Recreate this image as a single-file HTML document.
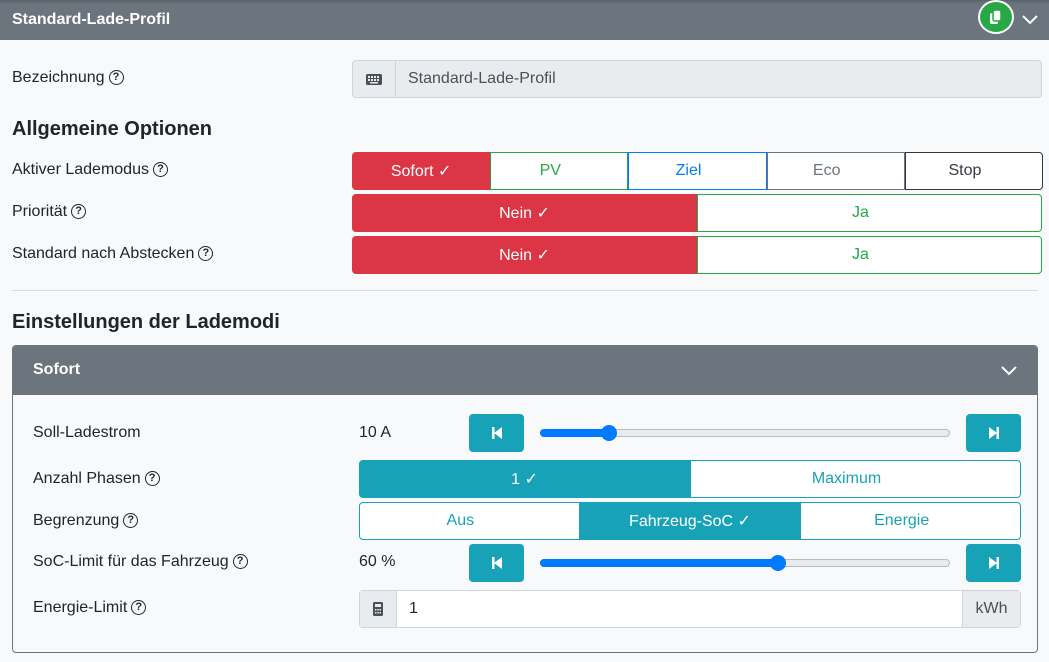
<!DOCTYPE html>
<html><head><meta charset="utf-8"><style>
*{box-sizing:border-box;margin:0;padding:0}
body{width:1049px;height:662px;overflow:hidden;background:#f8f9fa;font-family:"Liberation Sans",sans-serif;font-size:16px;color:#212529;position:relative}
.abs{position:absolute}
.hdr{left:0;top:0;width:1049px;height:40px;background:linear-gradient(#5a6169 0,#6c757d 4px,#6c757d);color:#fff;font-weight:bold;font-size:16px;line-height:40px;padding-left:12px}
.q{display:inline-block;width:15px;height:15px;border:1.6px solid #212529;border-radius:50%;font-size:11px;line-height:12px;text-align:center;font-weight:bold;vertical-align:2px;margin-left:4px}
.lbl{font-size:16px;line-height:20px}
.grp{display:flex;position:absolute}
.grp div{flex:1 1 0;width:0;text-align:center;border:1px solid;display:flex;align-items:center;justify-content:center}
.grp span.n{margin-right:18px}
h3{position:absolute;font-size:20px;font-weight:bold}
.tb{background:#17a2b8;border-radius:4px;width:55px;height:38px;display:flex;align-items:center;justify-content:center}
.rng{height:8px;border:1px solid #bbb;border-radius:4px;background:#e9ecef}
.fill{height:8px;background:#007bff;border-radius:4px;position:absolute;top:-1px;left:-1px}
.th{width:16px;height:16px;border-radius:50%;background:#007bff;position:absolute;top:-5px}
</style></head><body>
<div class="abs hdr">Standard-Lade-Profil</div>
<div class="abs" style="left:978px;top:0;width:36px;height:34px;border-radius:50%;background:#28a745;border:2px solid #fff;display:flex;align-items:center;justify-content:center"><svg width="14" height="16" viewBox="0 0 14 16"><rect x="1" y="4" width="8" height="11" rx="2" fill="#fff"/><rect x="4" y="1" width="8" height="11" rx="2" fill="#fff" stroke="#28a745" stroke-width="1.5"/></svg></div>
<svg class="abs" style="left:1022px;top:13px" width="16" height="12" viewBox="0 0 16 12"><path d="M1 3l7 7 7-7" stroke="#fff" stroke-width="2" fill="none"/></svg>

<div class="abs lbl" style="left:12px;top:68px">Bezeichnung<span class="q">?</span></div>
<div class="abs" style="left:352px;top:60px;width:690px;height:38px;border:1px solid #ced4da;border-radius:4px;background:#e9ecef;display:flex">
<div style="width:43px;border-right:1px solid #ced4da;display:flex;align-items:center;justify-content:center"><svg width="16" height="11"><rect x="0" y="0" width="16" height="11" rx="1.5" fill="#495057"/><g fill="#e9ecef"><rect x="2" y="2" width="2" height="2"/><rect x="5" y="2" width="2" height="2"/><rect x="8" y="2" width="2" height="2"/><rect x="11" y="2" width="2" height="2"/><rect x="2" y="5" width="2" height="2"/><rect x="5" y="5" width="2" height="2"/><rect x="8" y="5" width="2" height="2"/><rect x="11" y="5" width="2" height="2"/><rect x="4" y="8" width="8" height="1.5"/></g></svg></div>
<div style="padding-left:12px;line-height:36px;color:#495057">Standard-Lade-Profil</div></div>

<h3 style="left:12px;top:118px">Allgemeine Optionen</h3>
<div class="abs lbl" style="left:12px;top:160px">Aktiver Lademodus<span class="q">?</span></div>
<div class="grp" style="left:352px;top:152px;width:691px;height:38px">
<div style="background:#dc3545;border-color:#dc3545;color:#fff;border-radius:4px 0 0 4px">Sofort ✓</div>
<div style="border-color:#28a745;color:#28a745;background:#fff"><span class="n">PV</span></div>
<div style="border-color:#007bff;color:#007bff;background:#fff"><span class="n">Ziel</span></div>
<div style="border-color:#6c757d;color:#6c757d;background:#fff"><span class="n">Eco</span></div>
<div style="border-color:#343a40;color:#343a40;background:#fff;border-radius:0 4px 4px 0"><span class="n">Stop</span></div></div>
<div class="abs lbl" style="left:12px;top:202px">Priorität<span class="q">?</span></div>
<div class="grp" style="left:352px;top:194px;width:690px;height:38px">
<div style="background:#dc3545;border-color:#dc3545;color:#fff;border-radius:4px 0 0 4px">Nein ✓</div>
<div style="border-color:#28a745;color:#28a745;background:#fff;border-radius:0 4px 4px 0"><span class="n">Ja</span></div></div>
<div class="abs lbl" style="left:12px;top:244px">Standard nach Abstecken<span class="q">?</span></div>
<div class="grp" style="left:352px;top:236px;width:690px;height:38px">
<div style="background:#dc3545;border-color:#dc3545;color:#fff;border-radius:4px 0 0 4px">Nein ✓</div>
<div style="border-color:#28a745;color:#28a745;background:#fff;border-radius:0 4px 4px 0"><span class="n">Ja</span></div></div>
<div class="abs" style="left:12px;top:290px;width:1026px;height:1px;background:#dcdcdc"></div>

<h3 style="left:12px;top:311px">Einstellungen der Lademodi</h3>
<div class="abs" style="left:12px;top:345px;width:1026px;height:308px;border:1px solid #6c757d;border-radius:4px;background:#f8f9fa;overflow:hidden">
<div style="height:49px;background:#6c757d;color:#fff;font-weight:bold;line-height:48px;padding-left:20px">Sofort</div>
<svg class="abs" style="left:988px;top:18px" width="16" height="12" viewBox="0 0 16 12"><path d="M1 3l7 7 7-7" stroke="#fff" stroke-width="2" fill="none"/></svg>
</div>

<div class="abs lbl" style="left:33px;top:423px">Soll-Ladestrom</div>
<div class="abs lbl" style="left:359px;top:423px">10 A</div>
<div class="abs tb" style="left:469px;top:414px"><svg width="10" height="12"><rect x="0" y="0" width="2.5" height="12" fill="#fff"/><path d="M10 0v12L2 6z" fill="#fff"/></svg></div>
<div class="abs rng" style="left:540px;top:429px;width:410px"><div class="fill" style="width:70px"></div><div class="th" style="left:60px"></div></div>
<div class="abs tb" style="left:966px;top:414px"><svg width="10" height="12"><rect x="7.5" y="0" width="2.5" height="12" fill="#fff"/><path d="M0 0v12L8 6z" fill="#fff"/></svg></div>

<div class="abs lbl" style="left:33px;top:469px">Anzahl Phasen<span class="q">?</span></div>
<div class="grp" style="left:359px;top:460px;width:662px;height:38px">
<div style="background:#17a2b8;border-color:#17a2b8;color:#fff;border-radius:4px 0 0 4px">1 ✓</div>
<div style="border-color:#17a2b8;color:#17a2b8;background:#fff;border-radius:0 4px 4px 0"><span class="n">Maximum</span></div></div>

<div class="abs lbl" style="left:33px;top:511px">Begrenzung<span class="q">?</span></div>
<div class="grp" style="left:359px;top:502px;width:662px;height:38px">
<div style="border-color:#17a2b8;color:#17a2b8;background:#fff;border-radius:4px 0 0 4px"><span class="n">Aus</span></div>
<div style="background:#17a2b8;border-color:#17a2b8;color:#fff">Fahrzeug-SoC ✓</div>
<div style="border-color:#17a2b8;color:#17a2b8;background:#fff;border-radius:0 4px 4px 0"><span class="n">Energie</span></div></div>

<div class="abs lbl" style="left:33px;top:552px">SoC-Limit für das Fahrzeug<span class="q">?</span></div>
<div class="abs lbl" style="left:359px;top:552px">60 %</div>
<div class="abs tb" style="left:469px;top:544px"><svg width="10" height="12"><rect x="0" y="0" width="2.5" height="12" fill="#fff"/><path d="M10 0v12L2 6z" fill="#fff"/></svg></div>
<div class="abs rng" style="left:540px;top:559px;width:410px"><div class="fill" style="width:240px"></div><div class="th" style="left:229px"></div></div>
<div class="abs tb" style="left:966px;top:544px"><svg width="10" height="12"><rect x="7.5" y="0" width="2.5" height="12" fill="#fff"/><path d="M0 0v12L8 6z" fill="#fff"/></svg></div>

<div class="abs lbl" style="left:33px;top:598px">Energie-Limit<span class="q">?</span></div>
<div class="abs" style="left:359px;top:590px;width:662px;height:38px;border:1px solid #ced4da;border-radius:4px;background:#fff;display:flex">
<div style="width:37px;background:#e9ecef;border-right:1px solid #ced4da;display:flex;align-items:center;justify-content:center"><svg width="10" height="14"><rect width="10" height="14" rx="1.5" fill="#495057"/><rect x="2" y="2" width="6" height="3" fill="#e9ecef"/><g fill="#e9ecef"><rect x="2" y="7" width="1.5" height="1.5"/><rect x="4.3" y="7" width="1.5" height="1.5"/><rect x="6.5" y="7" width="1.5" height="1.5"/><rect x="2" y="10" width="1.5" height="1.5"/><rect x="4.3" y="10" width="1.5" height="1.5"/><rect x="6.5" y="10" width="1.5" height="1.5"/></g></svg></div>
<div style="flex:1;padding-left:12px;line-height:36px">1</div>
<div style="width:58px;background:#e9ecef;border-left:1px solid #ced4da;line-height:36px;text-align:center;color:#495057">kWh</div></div>
</body></html>
